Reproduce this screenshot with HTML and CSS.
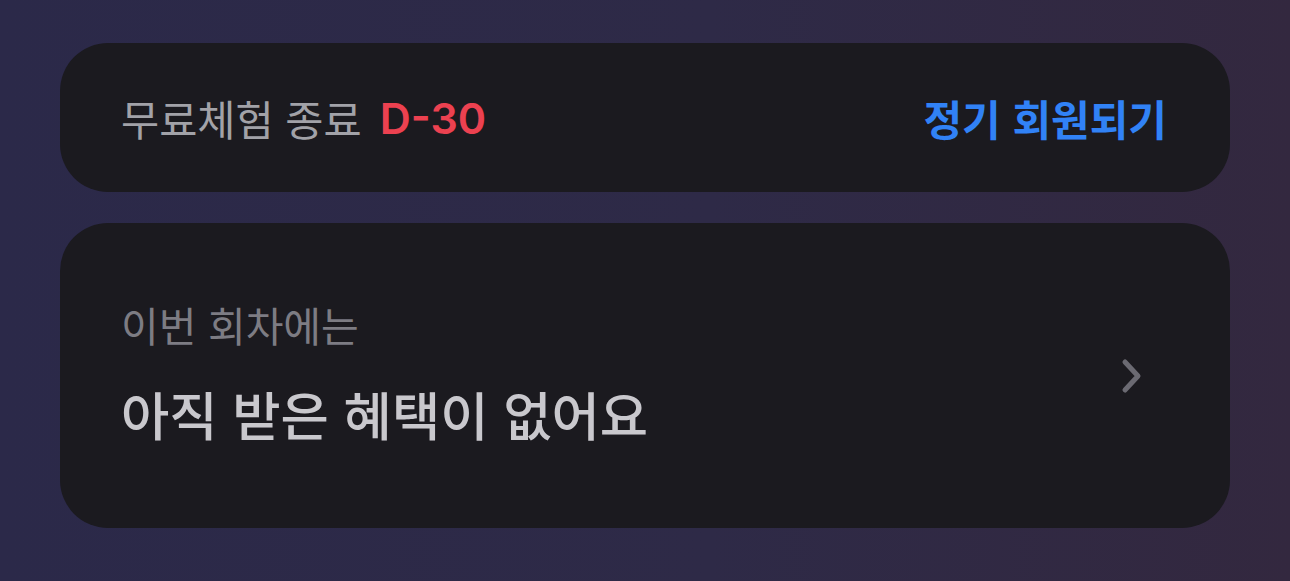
FILE: index.html
```html
<!DOCTYPE html>
<html lang="ko">
<head>
    <meta charset="UTF-8">
    <meta name="viewport" content="width=device-width, initial-scale=1.0">
    <title>멤버십</title>
    <link rel="stylesheet" href="styles.css">
</head>
<body>
    <div class="wrap">
        <div class="card trial">
            <div class="trial-left">
                <span class="trial-label">무료체험 종료</span>
                <span class="dday">D-30</span>
            </div>
            <a class="join" href="#">정기 회원되기</a>
        </div>

        <div class="card benefit">
            <div class="benefit-text">
                <p class="benefit-sub">이번 회차에는</p>
                <p class="benefit-main">아직 받은 혜택이 없어요</p>
            </div>
            <svg class="chevron" width="24" height="36" viewBox="0 0 24 36">
                <path d="M5 4 L18 18 L5 32" fill="none" stroke="#6b6a72" stroke-width="5" stroke-linecap="round" stroke-linejoin="round"/>
            </svg>
        </div>
    </div>
</body>
</html>
```
FILE: styles.css
```css
html, body { height: 100%; }
body { margin: 0; background: linear-gradient(90deg, #2b2949 0%, #2e2a47 55%, #33283f 100%); font-family: "Noto Sans CJK KR", "Noto Sans", sans-serif; }
.wrap { padding: 43px 60px 0; display: flex; flex-direction: column; gap: 31px; }
.card { background-color: #1b1a1f; border-radius: 48px; display: flex; align-items: center; justify-content: space-between; }
.trial { height: 149px; padding: 0 63px 0 61px; }
.trial-left { display: flex; align-items: center; gap: 18px; }
.trial-label { color: #a2a2a8; font-size: 41.5px; }
.dday { color: #ec4150; font-family: Inter, "Noto Sans", sans-serif; font-size: 43px; font-weight: 600; }
.join { color: #3182f6; font-size: 42px; font-weight: 700; text-decoration: none; }
.benefit { height: 305px; padding: 0 86px 0 61px; }
.benefit-text { margin-top: -9px; }
.benefit-text p { margin: 0; }
.benefit-sub { color: #7d7c83; font-size: 41px; line-height: 52px; }
.benefit-main { color: #c9c8cd; font-size: 52.5px; font-weight: 500; line-height: 64px; margin-top: 31px !important; }
.chevron { display: block; }
```
